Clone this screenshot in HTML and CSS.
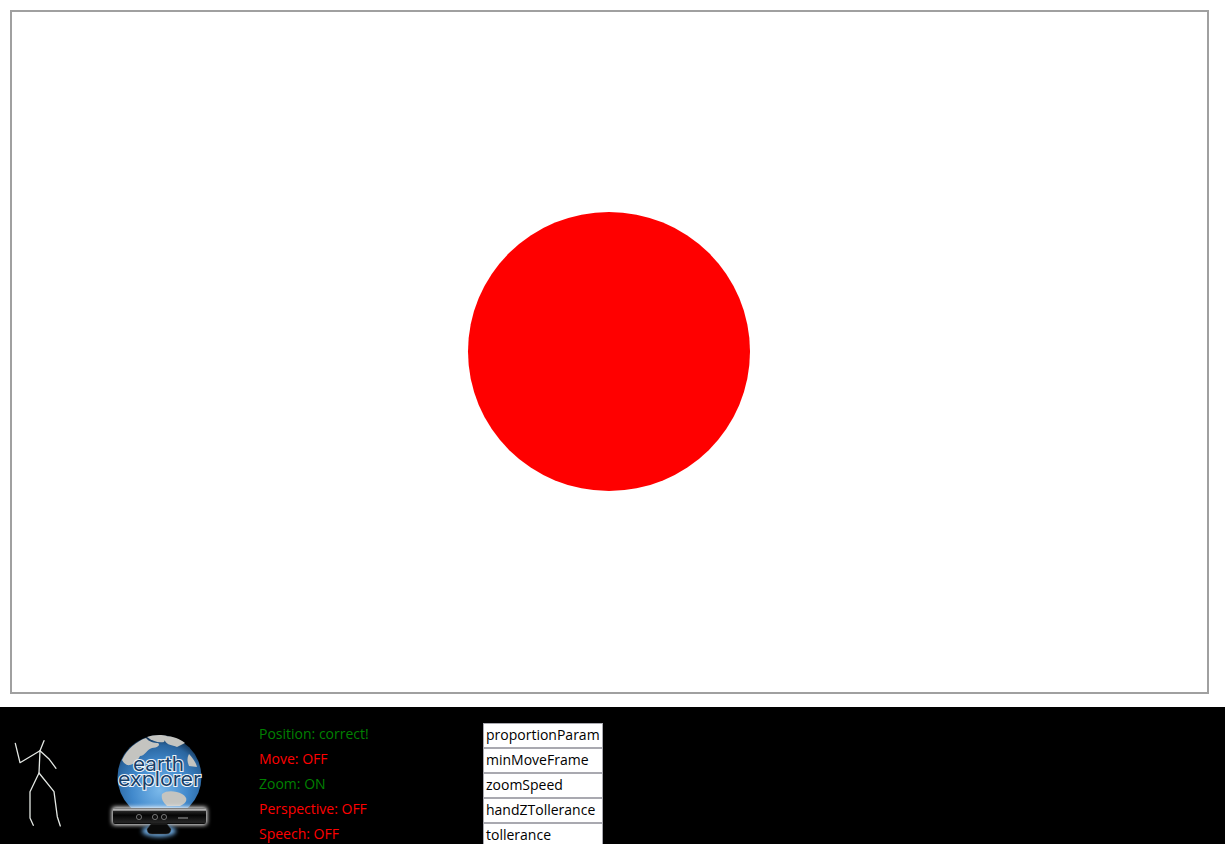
FILE: index.html
```html
<!DOCTYPE html>
<html lang="en">
<head>
<meta charset="utf-8">
<title>Earth Explorer</title>
<link rel="stylesheet" href="styles.css">
</head>
<body>
<main class="stage">
  <div class="canvas"><div class="dot"></div></div>
</main>
<footer class="panel">
  <svg class="skeleton" width="105" height="137" viewBox="0 707 105 137" aria-label="Tracked skeleton">
    <g class="bones">
      <polyline points="15.3,743.3 20,762.7 40,750.7 44,740.7"/>
      <polyline points="40,750.7 49.3,759.3 56,768.3"/>
      <polyline points="40,750.7 39,773 30,791.7 30,818 33.3,825.3"/>
      <polyline points="39,773 54,791.7 57.3,816.7 60.3,826"/>
    </g>
  </svg>
  <svg class="logo" width="110" height="114" viewBox="0 0 110 114" aria-label="Earth Explorer logo">
    <defs>
      <radialGradient id="sea" cx="0.5" cy="0.66" r="0.66">
        <stop offset="0" stop-color="#7ab8ea"/>
        <stop offset="0.5" stop-color="#4189cc"/>
        <stop offset="0.82" stop-color="#2a659f"/>
        <stop offset="1" stop-color="#0f2a46"/>
      </radialGradient>
      <linearGradient id="bar" x1="0" y1="0" x2="0" y2="1">
        <stop offset="0" stop-color="#666"/>
        <stop offset="0.12" stop-color="#c8c8c8"/>
        <stop offset="0.22" stop-color="#222"/>
        <stop offset="0.45" stop-color="#050505"/>
        <stop offset="0.9" stop-color="#262626"/>
        <stop offset="1" stop-color="#000"/>
      </linearGradient>
      <filter id="glow" x="-20%" y="-60%" width="140%" height="220%"><feGaussianBlur stdDeviation="2.2"/></filter>
      <filter id="soft" x="-10%" y="-10%" width="120%" height="120%"><feGaussianBlur stdDeviation="0.4"/></filter>
    </defs>
    <circle class="sea" cx="54.5" cy="47" r="42"/>
    <g class="land" filter="url(#soft)">
      <path d="M17 30 C22 19 32 11 41 8 C44 12 49 13 53 13 C56 15 52 18 47 18 C42 19 40 26 35 26 C32 32 27 36 22 35 C20 34 18 32 17 30Z"/>
      <path d="M42 7 C47 5 56 4 62 6 L59 12 C53 13 47 11 42 7Z"/>
      <path d="M60 6 C68 6 75 9 80 13 L72 17 C67 15 62 15 60 11Z"/>
      <path d="M84 24 C88 28 91 33 92 37 L84 36 C82 31 82 28 84 24Z"/>
      <path d="M57 64 C62 60 71 61 77 64 C84 68 82 73 75 76 L62 76 C58 72 56 69 57 64Z"/>
    </g>
    <g class="brand">
      <text x="28" y="41" textLength="51" lengthAdjust="spacingAndGlyphs">earth</text>
      <text x="13" y="56" textLength="83" lengthAdjust="spacingAndGlyphs">explorer</text>
    </g>
    <rect class="halo" x="7" y="77" width="95" height="18" rx="3" filter="url(#glow)"/>
    <ellipse class="halo-blue" cx="54" cy="101" rx="17" ry="6" filter="url(#glow)"/>
    <rect x="8" y="78" width="93" height="16" rx="2" fill="url(#bar)"/>
    <path class="stand" d="M46 94 L62 94 L66 99 Q66 104 61 104 L47 104 Q42 104 42 99Z"/>
    <g class="ports">
      <circle cx="34" cy="87" r="2.6"/>
      <circle cx="50" cy="87" r="2.6"/>
      <circle cx="59" cy="87" r="2.6"/>
      <path d="M73 88 H83"/>
    </g>
  </svg>
  <div class="status">
    <div class="ok">Position: correct!</div>
    <div class="off">Move: OFF</div>
    <div class="ok">Zoom: ON</div>
    <div class="off">Perspective: OFF</div>
    <div class="off">Speech: OFF</div>
  </div>
  <div class="params">
    <div class="param">proportionParam</div>
    <div class="param">minMoveFrame</div>
    <div class="param">zoomSpeed</div>
    <div class="param">handZTollerance</div>
    <div class="param">tollerance</div>
  </div>
</footer>
</body>
</html>
```
FILE: styles.css
```css
* { box-sizing: border-box; }
html, body { margin: 0; height: 100%; overflow: hidden; background: #fff; }
body { font-family: "Open Sans", "Noto Sans", sans-serif; font-size: 14px; }

.stage { height: 707px; padding: 10px 16px 13px 10px; }
.canvas {
  height: 684px;
  border: 2px solid #a0a0a0;
  display: flex;
  align-items: center;
  justify-content: center;
}
.dot { width: 282px; height: 279px; margin: 0 1px 1px 0; border-radius: 50%; background: #f00; }

.panel { height: 137px; background: #000; display: flex; align-items: flex-start; overflow: hidden; }
.skeleton { flex: none; }
.bones polyline { fill: none; stroke: #e4e8e4; stroke-width: 1.3; stroke-linejoin: round; stroke-linecap: round; }

.logo { flex: none; margin-top: 23px; }
.sea { fill: url(#sea); }
.land path { fill: #c4c4c0; }
.brand text {
  font-family: "Inter", sans-serif;
  font-size: 20px;
  font-weight: 400;
  fill: #173f68;
  stroke: #eef3f8;
  stroke-width: 2;
  paint-order: stroke;
}
.halo { fill: #fff; }
.halo-blue { fill: #6aa6dc; }
.stand { fill: #0a0a0a; stroke: #444; stroke-width: 0.5; }
.ports circle { fill: #111; stroke: #9a9a9a; stroke-width: 0.7; }
.ports path { stroke: #888; stroke-width: 1.2; fill: none; }

.status { flex: none; width: 224px; margin-left: 44px; padding-top: 14px; }
.status div { height: 25px; line-height: 25px; white-space: nowrap; }
.ok { color: #008000; }
.off { color: #f00; }

.params { flex: none; width: 120px; padding-top: 16px; }
.param {
  height: 25px;
  line-height: 21px;
  padding-left: 2px;
  background: #fff;
  border: 1px solid #a9a9b0;
  color: #000;
  white-space: nowrap;
  overflow: hidden;
}
```
